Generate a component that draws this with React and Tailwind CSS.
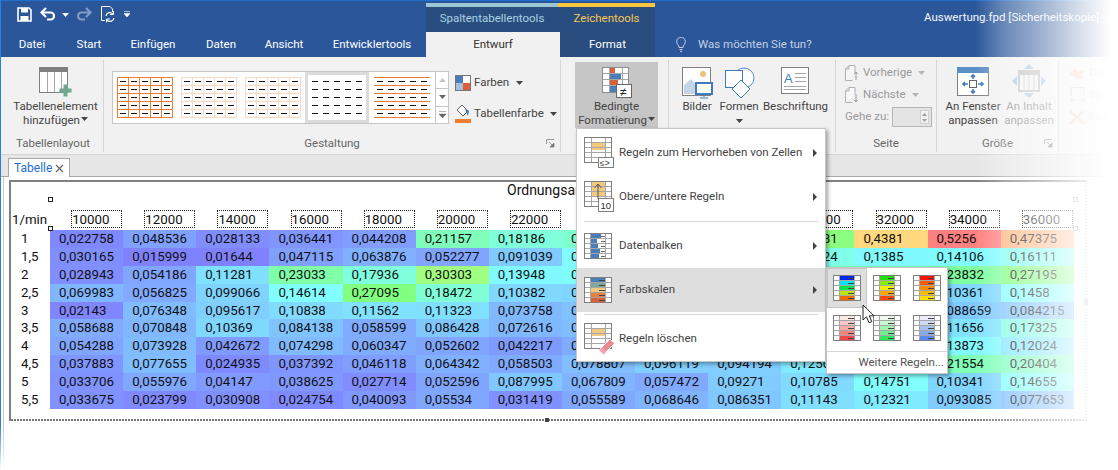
import React from 'react';

const rows = [
  ['1', ['0,022758','0,048536','0,028133','0,036441','0,044208','0,21157','0,18186','0,19212','0,22518','0,25107','0,28381','0,4381','0,5256','0,47375']],
  ['1,5', ['0,030165','0,015999','0,01644','0,047115','0,063876','0,052277','0,091039','0,14122','0,15233','0,16019','0,16624','0,1385','0,14106','0,16111']],
  ['2', ['0,028943','0,054186','0,11281','0,23033','0,17936','0,30303','0,13948','0,15217','0,16622','0,18204','0,20118','0,21907','0,23832','0,27195']],
  ['2,5', ['0,069983','0,056825','0,099066','0,14614','0,27095','0,18472','0,10382','0,10215','0,11038','0,12106','0,13217','0,11904','0,10361','0,1458']],
  ['3', ['0,02143','0,076348','0,095617','0,10838','0,11562','0,11323','0,073758','0,081204','0,090117','0,10206','0,11822','0,10318','0,088659','0,084215']],
  ['3,5', ['0,058688','0,070848','0,10369','0,084138','0,058599','0,086428','0,072616','0,079402','0,088715','0,10122','0,12019','0,12408','0,11656','0,17325']],
  ['4', ['0,054288','0,073928','0,042672','0,074298','0,060347','0,052602','0,042217','0,060118','0,079204','0,094017','0,11608','0,13022','0,13873','0,12024']],
  ['4,5', ['0,037883','0,077655','0,024935','0,037392','0,046118','0,064342','0,058503','0,078807','0,096119','0,094194','0,12503','0,16218','0,21554','0,20404']],
  ['5', ['0,033706','0,055976','0,04147','0,038625','0,027714','0,052596','0,087995','0,067809','0,057472','0,09271','0,10785','0,14751','0,10341','0,14655']],
  ['5,5', ['0,033675','0,023799','0,030908','0,024754','0,040093','0,05534','0,031419','0,055589','0,068646','0,086351','0,11143','0,12321','0,093085','0,077653']],
];

const headers = ['10000','12000','14000','16000','18000','20000','22000','24000','26000','28000','30000','32000','34000','36000'];

// blue > cyan > green > yellow > red, pastel like the reference
const stops = [
  [0.015, [128, 128, 255]],
  [0.145, [128, 255, 255]],
  [0.27, [128, 255, 128]],
  [0.4, [255, 255, 128]],
  [0.5256, [255, 128, 128]],
];

const cellColor = (text) => {
  const v = parseFloat(text.replace(',', '.'));
  for (let i = 1; i < stops.length; i++) {
    if (v <= stops[i][0]) {
      const [a, ca] = stops[i - 1];
      const [b, cb] = stops[i];
      const t = Math.max(0, (v - a) / (b - a));
      const c = ca.map((x, k) => Math.round(x + (cb[k] - x) * t));
      return `rgb(${c[0]},${c[1]},${c[2]})`;
    }
  }
  return 'rgb(255,128,128)';
};

const Caret = ({ color = '#444', className = '' }) => (
  <svg width="7" height="4" viewBox="0 0 7 4" className={`inline-block ${className}`}>
    <path d="M0 0h7L3.5 4z" fill={color} />
  </svg>
);

const Launcher = () => (
  <svg width="9" height="9" viewBox="0 0 9 9">
    <path d="M.5 5V.5H8" fill="none" stroke="#999" />
    <path d="M3 3l4 4M8 4v4H4z" fill="#777" stroke="#777" strokeWidth=".7" />
  </svg>
);

const Thumb = ({ line, lines = true, cols = true }) => {
  const ys = [0, 8, 16, 24, 32, 40];
  const xs = [0, 11, 22, 33, 44, 55];
  return (
    <svg width="56" height="41" viewBox="0 0 56 41" className="block">
      {lines && ys.map((y) => <path key={y} d={`M0 ${y + 0.5}h56`} stroke={line} />)}
      {cols && xs.map((x) => <path key={x} d={`M${x + 0.5} 0v41`} stroke={line} />)}
      {ys.slice(0, 5).map((y) =>
        xs.slice(0, 5).map((x) => (
          <path key={`${x}-${y}`} d={`M${x + 3} ${y + 4.5}h6`} stroke="#111" />
        ))
      )}
    </svg>
  );
};

const BaseTable = ({ children, w = 27, h = 25 }) => (
  <>
    <rect x=".5" y=".5" width={w} height={h} fill="#fff" stroke="#7f7f7f" />
    {children}
    {[7, 21].map((x) => <path key={x} d={`M${x + 0.5} 1v${h - 1}`} stroke="#a6a6a6" />)}
    {[5, 10, 15, 20].map((y) => <path key={y} d={`M1 ${y + 0.5}h${w - 1}`} stroke="#a6a6a6" />)}
  </>
);

const IconHighlight = () => (
  <svg width="31" height="32" viewBox="0 0 31 32">
    <BaseTable><rect x="7" y="6" width="14" height="7" fill="#f2c97d" /></BaseTable>
    <rect x="14.5" y="20.5" width="15" height="10" fill="#fff" stroke="#7f7f7f" />
    <text x="16" y="29" fontSize="8.5" fill="#333" fontFamily="Liberation Sans, sans-serif">≤&gt;</text>
  </svg>
);

const IconTop = () => (
  <svg width="31" height="32" viewBox="0 0 31 32">
    <BaseTable><rect x="7" y="1" width="14" height="15" fill="#f2c97d" /></BaseTable>
    <path d="M14 18V3M10.5 7L14 3l3.5 4" fill="none" stroke="#555" />
    <rect x="14.5" y="17.5" width="15" height="13" fill="#fff" stroke="#7f7f7f" />
    <text x="16.5" y="28" fontSize="9.5" fill="#333" fontFamily="Liberation Sans, sans-serif">10</text>
  </svg>
);

const IconBars = () => (
  <svg width="28" height="26" viewBox="0 0 28 26">
    <rect x=".5" y=".5" width="27" height="25" fill="#fff" stroke="#7f7f7f" />
    {[[1, 10], [6, 6], [11, 7], [16, 9], [21, 8]].map(([y, w]) => (
      <g key={y}>
        <rect x="7" y={y} width={w} height="4" fill="#4a7ebb" />
        <path d={`M17 ${y + 2.5}h5`} stroke="#666" />
      </g>
    ))}
    {[7, 22].map((x) => <path key={x} d={`M${x - 0.5} 1v24`} stroke="#a6a6a6" />)}
    {[5, 10, 15, 20].map((y) => <path key={y} d={`M1 ${y + 0.5}h26`} stroke="#a6a6a6" />)}
  </svg>
);

const ScaleIcon = ({ colors, tone = '#444', size = 7 }) => (
  <svg width="28" height="26" viewBox="0 0 28 26" className="block">
    <rect x=".5" y=".5" width="27" height="25" fill="#fff" stroke="#7f7f7f" />
    {colors.map((c, i) => (
      <g key={i}>
        <rect x={size} y={1 + i * 5} width="14" height="4.2" fill={c} />
        <path d={`M15 ${3.5 + i * 5}h6`} stroke={tone} />
      </g>
    ))}
    <path d="M6.5 1v24M21.5 1v24" stroke="#a6a6a6" />
    {[5, 10, 15, 20].map((y) => <path key={y} d={`M1 ${y + 0.5}h26`} stroke="#a6a6a6" />)}
  </svg>
);

const IconClear = () => (
  <svg width="31" height="32" viewBox="0 0 31 32">
    <BaseTable><rect x="7" y="6" width="14" height="7" fill="#f2c97d" /></BaseTable>
    <path d="M15 27L26 16l4.500 4.500-11 11z" fill="#e98a95" stroke="#fff" />
    <path d="M15 27l3-3 4.500 4.500-3 3z" fill="#f0a5ae" />
  </svg>
);

const IconAddElement = () => (
  <svg width="33" height="30" viewBox="0 0 33 30">
    <rect x=".5" y=".5" width="28" height="25" fill="#fff" stroke="#7f7f7f" />
    <rect x="0" y="0" width="29" height="5" fill="#7f7f7f" />
    {[8, 15, 22].map((x) => <path key={x} d={`M${x + 0.5} 5v20`} stroke="#a6a6a6" />)}
    <path d="M22 22h4v-4h4v4h4v4h-4v4h-4v-4h-4z" transform="translate(-1.5 -0.5)" fill="#6fa78f" />
  </svg>
);

const IconBedingte = () => (
  <svg width="30" height="31" viewBox="0 0 30 31">
    <rect x=".5" y=".5" width="26" height="25" fill="#fff" stroke="#8c8c8c" />
    <rect x="8" y="1" width="5" height="5" fill="#d9603b" />
    <rect x="8" y="7" width="11" height="5" fill="#4a7ebb" />
    <rect x="8" y="13" width="8" height="5" fill="#d9603b" />
    <rect x="8" y="19" width="6" height="6" fill="#4a7ebb" />
    {[7, 20].map((x) => <path key={x} d={`M${x + 0.5} 1v24`} stroke="#a6a6a6" />)}
    {[6, 12, 18].map((y) => <path key={y} d={`M1 ${y + 0.5}h25`} stroke="#a6a6a6" />)}
    <rect x="14.5" y="17.5" width="15" height="13" fill="#fff" stroke="#666" />
    <text x="18" y="28.5" fontSize="12" fill="#222" fontFamily="Liberation Sans, sans-serif">≠</text>
  </svg>
);

const IconBilder = () => (
  <svg width="31" height="33" viewBox="0 0 31 33">
    <rect x=".5" y=".5" width="28" height="28" fill="#fff" stroke="#7f7f7f" />
    <circle cx="21" cy="7" r="3" fill="#edc27b" />
    <path d="M2 27V18l7-6 8 8v7z" fill="#c5d5e8" />
    <rect x="14" y="16" width="16" height="11" fill="#fff" stroke="#3e7cb8" strokeWidth="2" />
    <path d="M22 27v3M18 31h8" stroke="#3e7cb8" />
  </svg>
);

const IconFormen = () => (
  <svg width="31" height="33" viewBox="0 0 31 33">
    <circle cx="20" cy="11" r="10" fill="#fff" stroke="#5b8fc4" />
    <rect x="1.500" y="3.500" width="17" height="17" fill="#fff" stroke="#3e7cb8" />
    <path d="M17 13l9 9-9 9-9-9z" fill="#fff" stroke="#3e7cb8" />
  </svg>
);

const IconBeschriftung = () => (
  <svg width="29" height="27" viewBox="0 0 29 27">
    <rect x=".5" y=".5" width="27" height="26" fill="#fff" stroke="#7f7f7f" />
    <text x="3" y="16" fontSize="13" fill="#3e7cb8" fontFamily="Liberation Sans, sans-serif">A</text>
    {[6, 10, 14].map((y) => <path key={y} d={`M14 ${y + 0.5}h11`} stroke="#a6a6a6" />)}
    {[19, 22].map((y) => <path key={y} d={`M3 ${y + 0.5}h22`} stroke="#a6a6a6" />)}
  </svg>
);

const IconPage = ({ down }) => (
  <svg width="15" height="16" viewBox="0 0 15 16">
    <path d="M.5 15.500V4L4 .5h6v7M.5 15.500h7M.5 4H4V.5" fill="#f7f7f7" stroke="#b0b0b0" />
    <path d={down ? 'M11 7v8M9 13l2 2 2-2' : 'M11 15V7M9 9l2-2 2 2'} fill="none" stroke="#9a9a9a" />
  </svg>
);

const IconFit = () => (
  <svg width="32" height="29" viewBox="0 0 32 29">
    <rect x=".5" y=".5" width="31" height="28" fill="#fff" stroke="#7f7f7f" />
    <rect x="0" y="0" width="32" height="6" fill="#5b8fc4" />
    <rect x="12.500" y="13.500" width="7" height="7" fill="#fff" stroke="#666" />
    <path d="M16 12V8M14 10l2-2 2 2M16 22v4M14 24l2 2 2-2M11 17H6M8 15l-2 2 2 2M21 17h5M24 15l2 2-2 2" fill="none" stroke="#3e7cb8" strokeWidth="1.6" />
  </svg>
);

const IconFitContent = () => (
  <svg width="34" height="34" viewBox="0 0 34 34" className="opacity-80">
    <path d="M17 0l5 5H12zM17 34l-5-5h10zM0 17l5-5v10zM34 17l-5-5v10z" fill="#9dbbdb" />
    <rect x="7" y="7" width="20" height="20" fill="#f4f4f4" stroke="#b5b5b5" strokeWidth="2" />
    <rect x="7" y="7" width="20" height="4" fill="#b5b5b5" />
    {[12, 17, 22].map((x) => <path key={x} d={`M${x} 11v16`} stroke="#c4c4c4" />)}
  </svg>
);

const IconDisabledA = () => (
  <svg width="17" height="17" viewBox="0 0 17 17">
    <path d="M0 9l7-6v3h8l-2 4 2 4H7v-1z" fill="#f4b9a6" />
  </svg>
);
const IconDisabledB = () => (
  <svg width="17" height="16" viewBox="0 0 17 16">
    <path d="M2 9V.5h13V9" fill="none" stroke="#b5b5b5" />
    <path d="M1 13h6M3 11l-2 2 2 2M10 13h6M14 11l2 2-2 2" fill="none" stroke="#a9c3dd" />
  </svg>
);
const IconDisabledC = () => (
  <svg width="16" height="15" viewBox="0 0 16 15">
    <path d="M1 1l14 13M15 1L1 14" stroke="#f4b9a6" strokeWidth="2.4" />
  </svg>
);

const Save = () => (
  <svg width="15" height="15" viewBox="0 0 15 15">
    <path d="M1 1h11l2 2v11H1z" fill="none" stroke="#fff" strokeWidth="1.6" />
    <rect x="4" y="1" width="7" height="4.500" fill="#fff" />
    <rect x="3.500" y="9" width="8" height="5" fill="#fff" />
  </svg>
);

const Undo = ({ flip, color }) => (
  <svg width="17" height="14" viewBox="0 0 17 14" className={flip ? '-scale-x-100' : ''}>
    <path d="M2 5.500h8.500a3.500 3.500 0 010 7H7" fill="none" stroke={color} strokeWidth="2.2" />
    <path d="M6 1L1.500 5.500 6 10" fill="none" stroke={color} strokeWidth="2.2" />
  </svg>
);

const Refresh = () => (
  <svg width="16" height="17" viewBox="0 0 16 17">
    <path d="M10 .5H1.500v14H5M10 .5L12.500 3v3" fill="none" stroke="#fff" />
    <path d="M6 10a4 4 0 017-2M14 12a4 4 0 01-7 2" fill="none" stroke="#fff" strokeWidth="1.3" />
    <path d="M13.500 5v3.500H10M6.500 16.500V13H10" fill="none" stroke="#fff" />
  </svg>
);

const Bulb = () => (
  <svg width="10" height="15" viewBox="0 0 10 15">
    <path d="M3 10.500C3 8 .7 7.500.7 4.500a4.300 4.300 0 018.600 0C9.300 7.500 7 8 7 10.500zM3.500 12.500h3M4 14.500h2" fill="none" stroke="#c3cfe0" />
  </svg>
);

const Cursor = () => (
  <svg width="14" height="21" viewBox="0 0 14 21">
    <path d="M1 1v15l3.500-3.200 2.500 6 2.800-1.200-2.500-5.800H12z" fill="#fff" stroke="#222" strokeWidth="1" />
  </svg>
);

const Tab = ({ children, width }) => (
  <div className={`flex items-center justify-center ${width}`}>{children}</div>
);

const LargeButton = ({ icon, lines, className = '', disabled, caret, iconClass = 'pt-[7px]' }) => (
  <div className={`flex flex-col items-center shrink-0 ${disabled ? 'text-[#8f8f8f]' : 'text-[#444]'} ${className}`}>
    <div className={`h-[40px] flex justify-center ${iconClass}`}>{icon}</div>
    {lines.map((l) => <div key={l} className="leading-[13.5px] whitespace-nowrap">{l}</div>)}
    {caret}
  </div>
);

const Group = ({ label, width, children, launcher }) => (
  <div className={`relative flex flex-col shrink-0 h-[92px] mt-[3px] border-r border-[#d6d6d6] ${width}`}>
    <div className="flex-1 flex min-h-0">{children}</div>
    <div className="h-[17px] leading-[17px] text-center text-[#666]">{label}</div>
    {launcher && <div className="absolute right-[5px] bottom-[4px]"><Launcher /></div>}
  </div>
);

const MenuItem = ({ icon, label, active, arrow = true }) => (
  <div className={`h-[44px] flex items-center pl-[7px] pr-[8px] ${active ? 'bg-[#dedede]' : ''}`}>
    <div className="w-[35px] shrink-0">{icon}</div>
    <div className="flex-1 text-[#444] whitespace-nowrap">{label}</div>
    {arrow && <svg width="4" height="8" viewBox="0 0 4 8"><path d="M0 0l4 4-4 4z" fill="#444" /></svg>}
  </div>
);

const Handle = ({ className }) => (
  <div className={`absolute w-[5px] h-[5px] bg-white border border-[#222] ${className}`} />
);

const scale1 = ['#0022ee', '#00e6f0', '#00e04a', '#b8e800', '#f06a00'];
const scale2 = ['#22dd00', '#88ee00', '#f6ee00', '#ffa800', '#ff4a00'];
const scale3 = ['#ff1000', '#ff5a00', '#ff8a00', '#ffb800', '#ffe000'];
const scale4 = ['#fde8e8', '#ffc8c8', '#ffaaaa', '#ff8080', '#f04848'];
const scale5 = ['#eef8ee', '#c8f8d0', '#a0f5b0', '#70f090', '#30e860'];
const scale6 = ['#eeeef8', '#cfdaf2', '#a8c0f0', '#86a8f0', '#5a88ee'];

export default function App() {
  return (
    <div className="relative w-[1118px] h-[470px] overflow-hidden bg-white flex flex-col font-['Roboto',sans-serif] text-[11.5px] text-[#444]">
      {/* Title bar */}
      <div className="h-[57px] shrink-0 bg-[#2b579a] border-t border-[#1f6fd0] text-white">
        <div className="h-[31px] flex">
          <div className="w-[426px] shrink-0 flex items-start pl-[17px] pt-[6px]">
            <Save />
            <div className="ml-[8px]"><Undo color="#fff" /></div>
            <Caret color="#fff" className="ml-[5px] mt-[6px]" />
            <div className="ml-[6px]"><Undo color="#7f9cc6" flip /></div>
            <div className="ml-[8px] -mt-[1px]"><Refresh /></div>
            <svg width="6" height="6" viewBox="0 0 6 6" className="ml-[8px] mt-[4px]"><path d="M0 .5h6M0 2.500h6L3 6z" fill="#fff" stroke="#fff" strokeWidth=".6" /></svg>
          </div>
          <div className="w-[132px] shrink-0 mt-[2px] bg-[#2a4d7f] border-t-4 border-[#9cc6d4] text-[#a9d3e3] text-center leading-[22px]">Spaltentabellentools</div>
          <div className="w-[97px] shrink-0 mt-[2px] bg-[#2a4d7f] border-t-4 border-[#f8c53c] text-[#f6c850] text-center leading-[22px]">Zeichentools</div>
          <div className="pl-[269px] pt-[8px] whitespace-nowrap text-[#f4f6fa]">Auswertung.fpd [Sicherheitskopie] - F</div>
        </div>
        <div className="h-[25px] flex items-center">
          <div className="flex h-full items-center w-[426px] shrink-0">
            <Tab width="w-[64px]">Datei</Tab>
            <Tab width="w-[50px]">Start</Tab>
            <Tab width="w-[78px]">Einfügen</Tab>
            <Tab width="w-[58px]">Daten</Tab>
            <Tab width="w-[68px]">Ansicht</Tab>
            <Tab width="w-[108px]">Entwicklertools</Tab>
          </div>
          <div className="w-[134px] shrink-0 h-full bg-[#f1f1f1] text-[#333] flex items-center justify-center">Entwurf</div>
          <div className="w-[95px] shrink-0 h-full bg-[#2a4d7f] flex items-center justify-center">Format</div>
          <div className="ml-[21px]"><Bulb /></div>
          <div className="ml-[12px] text-[#c3cfe0]">Was möchten Sie tun?</div>
        </div>
      </div>

      {/* Ribbon */}
      <div className="h-[98px] shrink-0 bg-[#f1f1f1] border-b border-[#d4d4d4] flex pl-[3px]">
        <Group label="Tabellenlayout" width="w-[101px]">
          <LargeButton
            className="ml-[10px] w-[85px]"
            icon={<IconAddElement />}
            lines={['Tabellenelement']}
            caret={<div className="leading-[13.5px]">hinzufügen<Caret className="ml-[1px] mb-[2px]" /></div>}
          />
        </Group>
        <Group label="Gestaltung" width="w-[457px]" launcher>
          <div className="ml-[8px] mt-[11px] h-[53px] w-[337px] flex bg-white border border-[#c6c6c6]">
            <div className="flex-1 flex items-center pl-[4px]">
              <div className="w-[64px]"><Thumb line="#ed7d31" /></div>
              <div className="w-[64px]"><Thumb line="#f8d9c4" /></div>
              <div className="w-[60px]"><Thumb line="#f8d9c4" /></div>
              <div className="w-[64px] h-[51px] flex items-center justify-center border-[3px] border-[#dcdcdc] mr-[5px]"><Thumb lines={false} cols={false} /></div>
              <Thumb line="#ed7d31" cols={false} />
            </div>
            <div className="w-[13px] flex flex-col border-l border-[#c6c6c6]">
              <div className="flex-1 flex items-center justify-center border-b border-[#c6c6c6]"><svg width="7" height="4" viewBox="0 0 7 4"><path d="M3.500 0L7 4H0z" fill="#c4c4c4" /></svg></div>
              <div className="flex-1 flex items-center justify-center border-b border-[#c6c6c6]"><Caret color="#666" /></div>
              <div className="flex-1 flex items-center justify-center"><svg width="7" height="7" viewBox="0 0 7 7"><path d="M0 .5h7M0 3h7L3.500 7z" fill="#666" stroke="#666" strokeWidth=".5" /></svg></div>
            </div>
          </div>
          <div className="ml-[6px] mt-[14px] flex flex-col whitespace-nowrap">
            <div className="flex items-center h-[17px]">
              <svg width="16" height="16" viewBox="0 0 16 16"><rect x=".5" y=".5" width="15" height="15" fill="#fff" stroke="#777" /><rect x="1" y="1" width="7" height="7" fill="#4a7ebb" /><rect x="8" y="8" width="7" height="7" fill="#d9603b" /><rect x="1" y="8" width="7" height="7" fill="#a8c0dc" /></svg>
              <span className="ml-[3px]">Farben</span>
              <Caret className="ml-[7px]" />
            </div>
            <div className="flex items-center h-[19px] mt-[13px]">
              <svg width="16" height="19" viewBox="0 0 16 19"><path d="M7 1l6 6-5 5-6-6z" fill="#fff" stroke="#666" /><path d="M10 4l4 3-1 5-2-4z" fill="#3e7cb8" /><rect x="0" y="15" width="16" height="4" fill="#ed7d31" /></svg>
              <span className="ml-[3px]">Tabellenfarbe</span>
              <Caret className="ml-[6px]" />
            </div>
          </div>
        </Group>
        <Group label="F" width="w-[108px]">
          <div className="ml-[14px] mt-[2px] w-[83px] h-[66px] bg-[#c6c6c6] flex flex-col items-center">
            <LargeButton
              className="-mt-[2px]"
              icon={<IconBedingte />}
              lines={['Bedingte']}
              caret={<div className="leading-[13.5px]">Formatierung<Caret className="ml-[1px] mb-[2px]" /></div>}
            />
          </div>
        </Group>
        <Group label="" width="w-[167px]">
          <LargeButton className="ml-[13px] w-[30px]" icon={<IconBilder />} lines={['Bilder']} />
          <LargeButton className="ml-[8px] w-[38px]" icon={<IconFormen />} lines={['Formen']} caret={<Caret className="mt-[5px]" />} />
          <LargeButton className="ml-[5px] w-[65px]" icon={<IconBeschriftung />} lines={['Beschriftung']} />
        </Group>
        <Group label="Seite" width="w-[101px]">
          <div className="ml-[9px] flex flex-col text-[#9a9a9a] whitespace-nowrap">
            <div className="flex items-center h-[22px] mt-[2px]">
              <IconPage />
              <span className="ml-[3px]">Vorherige</span>
              <Caret color="#b5b5b5" className="ml-[6px]" />
            </div>
            <div className="flex items-center h-[22px]">
              <IconPage down />
              <span className="ml-[3px]">Nächste</span>
              <Caret color="#b5b5b5" className="ml-[6px]" />
            </div>
            <div className="flex items-center h-[22px]">
              <span>Gehe zu:</span>
              <div className="ml-[3px] w-[40px] h-[20px] bg-[#e4e4e4] border border-[#b5b5b5] flex justify-end items-center pr-[2px]">
                <div className="w-[9px] h-[14px] flex flex-col items-center justify-center gap-[3px] bg-[#f1f1f1] border border-[#d0d0d0]">
                  <svg width="5" height="3" viewBox="0 0 5 3"><path d="M2.500 0L5 3H0z" fill="#a0a0a0" /></svg>
                  <svg width="5" height="3" viewBox="0 0 5 3"><path d="M0 0h5L2.500 3z" fill="#a0a0a0" /></svg>
                </div>
              </div>
            </div>
          </div>
        </Group>
        <Group label="Größe" width="w-[122px]" launcher>
          <LargeButton className="ml-[8px] w-[56px]" icon={<IconFit />} lines={['An Fenster', 'anpassen']} />
          <LargeButton className="ml-[3px] w-[50px]" disabled iconClass="pt-[4px]" icon={<IconFitContent />} lines={['An Inhalt', 'anpassen']} />
        </Group>
        <div className="mt-[3px] pl-[10px] flex flex-col text-[#bdbdbd] whitespace-nowrap">
          <div className="flex items-center h-[22px] mt-[2px] gap-[3px]"><IconDisabledA /><span>Date</span></div>
          <div className="flex items-center h-[22px] gap-[3px]"><IconDisabledB /><span>Spalt</span></div>
          <div className="flex items-center h-[22px] gap-[3px]"><IconDisabledC /><span>Spalt</span></div>
        </div>
      </div>

      {/* Document tabs */}
      <div className="h-[22px] shrink-0 bg-[#e6e6e6] border-b border-[#a8a8a8] pl-[8px] pt-[3px]">
        <div className="w-[62px] h-[19px] bg-white border border-b-0 border-[#a8a8a8] flex items-center justify-between pl-[5px] pr-[5px] text-[#1f6fd0] text-[12px]">
          <span>Tabelle</span>
          <svg width="9" height="9" viewBox="0 0 9 9"><path d="M1 1l7 7M8 1L1 8" stroke="#666" strokeWidth="1.200" /></svg>
        </div>
      </div>

      {/* Report canvas */}
      <div className="relative flex-1 ml-[3px] border-l border-[#c8c8c8] pl-[5px] pt-[3px] text-[13.3px] text-[#111]">
        <div className="relative w-[1078px] h-[241px] border-t-2 border-l-2 border-[#808080]">
          <div className="pl-[496px] h-[17px] leading-[17px] text-[14px] whitespace-nowrap">Ordnungsanalyse</div>
          <div className="ml-[1px] mt-[11px] grid grid-cols-[38px_repeat(14,73.14px)] grid-rows-[20px] auto-rows-[17.9px]">
            <div className="h-[18px] leading-[20px] whitespace-nowrap">1/min</div>
            {headers.map((h) => (
              <div key={h} className="flex justify-end pr-[1px]">
                <div className="w-[51px] h-[18px] leading-[18px] border border-dotted border-[#222]">{h}</div>
              </div>
            ))}
            {rows.map(([label, values]) => (
              <React.Fragment key={label}>
                <div className="pl-[9px] leading-[18px]">{label}</div>
                {values.map((v, i) => (
                  <div key={i} className="pl-[9px] leading-[18px]" style={{ backgroundColor: cellColor(v) }}>{v}</div>
                ))}
              </React.Fragment>
            ))}
          </div>
          <Handle className="left-[37px] top-[15px]" />
          <Handle className="left-[37px] top-[44px]" />
          <Handle className="left-[1062px] top-[15px] border-[#999]" />
          <Handle className="left-[1062px] top-[44px] border-[#999]" />
          {/* dashed band edges */}
          <div className="absolute right-0 top-0 bottom-0 w-[2px] bg-[repeating-linear-gradient(0deg,#999_0_1px,transparent_1px_3px)]" />
          <div className="absolute left-0 right-0 bottom-0 h-[2px] bg-[repeating-linear-gradient(90deg,#777_0_2px,transparent_2px_3px)]" />
          <div className="absolute left-[534px] bottom-[-1px] w-[4px] h-[4px] bg-[#444]" />
          <div className="absolute right-[-1px] top-[117px] w-[4px] h-[6px] bg-[#aaa]" />
        </div>
      </div>

      {/* Dropdown menu */}
      <div className="absolute left-[576px] top-[128px] w-[250px] h-[234px] bg-white border border-[#c6c6c6] shadow-[2px_2px_4px_rgba(0,0,0,0.35)] pt-[2px] z-10">
        <MenuItem icon={<IconHighlight />} label="Regeln zum Hervorheben von Zellen" />
        <MenuItem icon={<IconTop />} label="Obere/untere Regeln" />
        <div className="h-[1px] my-[2px] mx-[7px] bg-[#d6d6d6]" />
        <MenuItem icon={<IconBars />} label="Datenbalken" />
        <MenuItem active icon={<ScaleIcon colors={['#4a7ebb', '#7fa89a', '#f2c97d', '#e58043', '#d9603b']} />} label="Farbskalen" />
        <div className="h-[1px] my-[2px] mx-[7px] bg-[#d6d6d6]" />
        <MenuItem arrow={false} icon={<IconClear />} label="Regeln löschen" />
      </div>

      {/* Colour scale submenu */}
      <div className="absolute left-[826px] top-[267px] w-[122px] h-[107px] bg-white border border-[#c6c6c6] shadow-[2px_2px_4px_rgba(0,0,0,0.35)] z-20 flex flex-col">
        <div className="grid grid-cols-[repeat(3,40px)] auto-rows-[40px]">
          {[scale1, scale2, scale3, scale4, scale5, scale6].map((s, i) => (
            <div key={i} className={`flex items-center justify-center ${i === 0 ? 'bg-[#dedede] border border-[#c6c6c6]' : ''}`}>
              <ScaleIcon colors={s} />
            </div>
          ))}
        </div>
        <div className="h-[1px] mt-[3px] bg-[#d6d6d6]" />
        <div className="flex-1 flex items-center justify-end pr-[3px] text-[#555]">Weitere Regeln...</div>
      </div>
      <div className="absolute left-[862px] top-[304px] z-30"><Cursor /></div>

      {/* Fade at the screenshot's right and lower left edge */}
      <div className="absolute top-0 right-0 bottom-0 w-[143px] z-40 pointer-events-none bg-[linear-gradient(90deg,rgba(255,255,255,0)_0,rgba(255,255,255,0.3)_30px,rgba(255,255,255,0.6)_75px,rgba(255,255,255,0.78)_100px,#fff_135px)]" />
      <div className="absolute left-0 top-0 bottom-0 w-[1px] bg-[#2a7fdc] z-40" />
      <div className="absolute left-0 bottom-0 w-[12px] h-[45px] z-50 bg-[linear-gradient(180deg,rgba(255,255,255,0),#fff)]" />
    </div>
  );
}
